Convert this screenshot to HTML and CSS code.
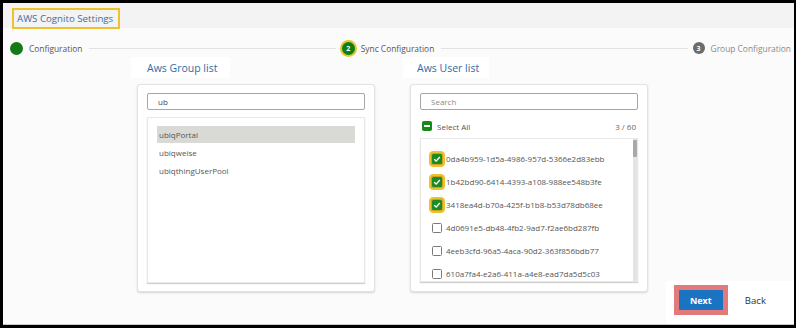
FILE: index.html
```html
<!DOCTYPE html>
<html>
<head>
<meta charset="utf-8">
<link rel="stylesheet" href="styles.css">
</head>
<body>
<div class="frame">
  <div class="header">
    <div class="title">AWS Cognito Settings</div>
  </div>
  <div class="steps">
    <div class="step">
      <span class="dot dot-done"></span>
      <span class="step-label">Configuration</span>
    </div>
    <div class="line"></div>
    <div class="step">
      <span class="dot dot-active">2</span>
      <span class="step-label">Sync Configuration</span>
    </div>
    <div class="line"></div>
    <div class="step">
      <span class="dot dot-todo">3</span>
      <span class="step-label step-label-todo">Group Configuration</span>
    </div>
  </div>
  <div class="panels">
    <div class="panel">
      <div class="tab">Aws Group list</div>
      <div class="card">
        <div class="input">ub</div>
        <div class="list list-groups">
          <div class="group-item selected">ubiqPortal</div>
          <div class="group-item">ubiqweise</div>
          <div class="group-item">ubiqthingUserPool</div>
        </div>
      </div>
    </div>
    <div class="panel panel-right">
      <div class="tab tab-right">Aws User list</div>
      <div class="card">
        <div class="input placeholder">Search</div>
        <div class="select-all">
          <span class="cb cb-partial"><span class="minus"></span></span>
          <span class="select-text">Select All</span>
          <span class="count">3 / 60</span>
        </div>
        <div class="list list-users">
          <div class="users">
            <div class="user"><span class="cb cb-checked"><svg viewBox="0 0 10 10" width="10" height="10"><polyline points="2.2,5.2 4.2,7.1 7.8,3" fill="none" stroke="#fff" stroke-width="1.4"/></svg></span><span class="uid">0da4b959-1d5a-4986-957d-5366e2d83ebb</span></div>
            <div class="user"><span class="cb cb-checked"><svg viewBox="0 0 10 10" width="10" height="10"><polyline points="2.2,5.2 4.2,7.1 7.8,3" fill="none" stroke="#fff" stroke-width="1.4"/></svg></span><span class="uid">1b42bd90-6414-4393-a108-988ee548b3fe</span></div>
            <div class="user"><span class="cb cb-checked"><svg viewBox="0 0 10 10" width="10" height="10"><polyline points="2.2,5.2 4.2,7.1 7.8,3" fill="none" stroke="#fff" stroke-width="1.4"/></svg></span><span class="uid">3418ea4d-b70a-425f-b1b8-b53d78db68ee</span></div>
            <div class="user"><span class="cb"></span><span class="uid">4d0691e5-db48-4fb2-9ad7-f2ae6bd287fb</span></div>
            <div class="user"><span class="cb"></span><span class="uid">4eeb3cfd-96a5-4aca-90d2-363f856bdb77</span></div>
            <div class="user"><span class="cb"></span><span class="uid">610a7fa4-e2a6-411a-a4e8-ead7da5d5c03</span></div>
          </div>
          <div class="scrollbar"><div class="thumb"></div></div>
        </div>
      </div>
    </div>
    <div class="actions">
      <div class="next-wrap"><button class="next">Next</button></div>
      <span class="back">Back</span>
    </div>
  </div>
</div>
</body>
</html>
```

FILE: styles.css
```css
* { box-sizing: border-box; }
html, body { margin: 0; padding: 0; }
body {
  background: #000;
  width: 796px;
  height: 328px;
  overflow: hidden;
  font-family: "Open Sans", "Liberation Sans", sans-serif;
}
.frame {
  margin: 3px 2px 0 3px;
  height: 322px;
  background: #fbfbfb;
  border-bottom: 1px solid #c8c8c8;
  display: flex;
  flex-direction: column;
}
.header {
  height: 25px;
  background: #f3f3f3;
  padding: 2px 0 0 9px;
  flex: none;
}
.title {
  display: inline-block;
  height: 21px;
  line-height: 17px;
  border: 2px solid #efc02f;
  padding: 0 5px 0 3px;
  font-size: 9.7px;
  color: #3d6f9d;
}
.steps {
  flex: none;
  display: flex;
  align-items: center;
  padding: 13px 3px 0 7px;
  height: 27px;
}
.step {
  display: flex;
  align-items: center;
  height: 14px;
}
.dot {
  width: 13px;
  height: 13px;
  border-radius: 50%;
  display: flex;
  align-items: center;
  justify-content: center;
  font-size: 7px;
  font-weight: 700;
  color: #fff;
  flex: none;
}
.dot-done { background: #137a17; }
.dot-active {
  background: #0f7f14;
  box-shadow: 0 0 0 2px #e9c22d;
  margin-left: 2px;
}
.dot-todo { background: #6b6b6b; width: 12px; height: 12px; margin-left: 1px; }
.step-label {
  font-size: 8.4px;
  color: #555;
  margin-left: 6px;
}
.step-label-todo { color: #8a8a8a; }
.line {
  flex: 1;
  height: 1px;
  background: #e2e2e2;
  margin: 0 4px 0 7px;
}
.panels {
  flex: 1;
  display: flex;
  align-items: flex-start;
  padding: 2px 0 0 134px;
}
.panel {
  width: 238px;
  flex: none;
  display: flex;
  flex-direction: column;
  align-items: flex-start;
}
.panel-right { margin-left: 35px; }
.tab {
  margin-left: -6px;
  height: 21px;
  line-height: 23px;
  padding: 0 13px 0 16px;
  background: #fff;
  font-size: 10.5px;
  color: #2f6ca6;
}
.tab-right { margin-left: -7px; padding: 0 10px 0 14px; }
.card {
  align-self: stretch;
  margin-top: 6px;
  height: 208px;
  background: #fff;
  border: 1px solid #e3e3e3;
  border-radius: 3px;
  box-shadow: 0 1px 2px rgba(0,0,0,0.15);
  padding: 8px 9px 0 9px;
}
.input {
  height: 17px;
  border: 1px solid #a6a6a6;
  border-radius: 2px;
  padding-left: 10px;
  line-height: 15px;
  font-size: 8px;
  color: #444;
}
.placeholder { color: #8a8a8a; }
.list {
  border: 1px solid #e8e8e8;
  box-shadow: 0 1px 1px rgba(0,0,0,0.18);
  background: #fff;
}
.list-groups {
  margin-top: 7px;
  height: 166px;
  padding: 8px 9px 0 9px;
}
.group-item {
  height: 18px;
  line-height: 18px;
  padding-left: 2px;
  font-size: 8px;
  color: #555;
}
.group-item.selected {
  background: #d9dad6;
  height: 17px;
  line-height: 17px;
  margin-bottom: 1px;
}
.select-all {
  display: flex;
  align-items: center;
  height: 18px;
  margin-top: 7px;
  padding: 0 2px 0 2px;
  font-size: 8px;
  color: #555;
}
.select-text { margin-left: 5px; }
.count { margin-left: auto; color: #666; }
.cb {
  width: 10px;
  height: 10px;
  border: 1.3px solid #7a7a7a;
  border-radius: 1.5px;
  background: #fff;
  flex: none;
  display: flex;
  align-items: center;
  justify-content: center;
}
.cb-partial {
  background: #148a1c;
  border-color: #148a1c;
}
.minus {
  width: 6px;
  height: 1.5px;
  background: #fff;
}
.cb-checked {
  background: #1c8b22;
  border: none;
  box-shadow: 0 0 0 1px #c9a21d, 0 0 0 3px #ebc132;
}
.list-users {
  margin-top: 3px;
  height: 144px;
  display: flex;
  overflow: hidden;
}
.users {
  flex: 1;
  padding: 8px 0 0 11px;
  overflow: hidden;
}
.user {
  display: flex;
  align-items: center;
  height: 23px;
  font-size: 8px;
  color: #555;
}
.uid { margin-left: 4px; white-space: nowrap; }
.scrollbar {
  width: 4px;
  background: #e4e4e4;
  flex: none;
  padding-top: 1px;
}
.thumb {
  height: 17px;
  background: #a9a9a9;
  border-radius: 1px;
}
.actions {
  align-self: flex-end;
  margin-left: auto;
  background: #fff;
  display: flex;
  align-items: center;
  padding: 4px 28px 9px 8px;
}
.next-wrap {
  background: #e27a7c;
  padding: 5px;
}
.next {
  display: block;
  width: 44px;
  height: 20px;
  border: none;
  border-radius: 1px;
  background: #1b74c1;
  color: #fff;
  font-family: "Open Sans", "Liberation Sans", sans-serif;
  font-size: 9px;
  font-weight: 700;
  padding: 0;
}
.back {
  margin-left: 17px;
  font-size: 9.6px;
  color: #333;
}
```
